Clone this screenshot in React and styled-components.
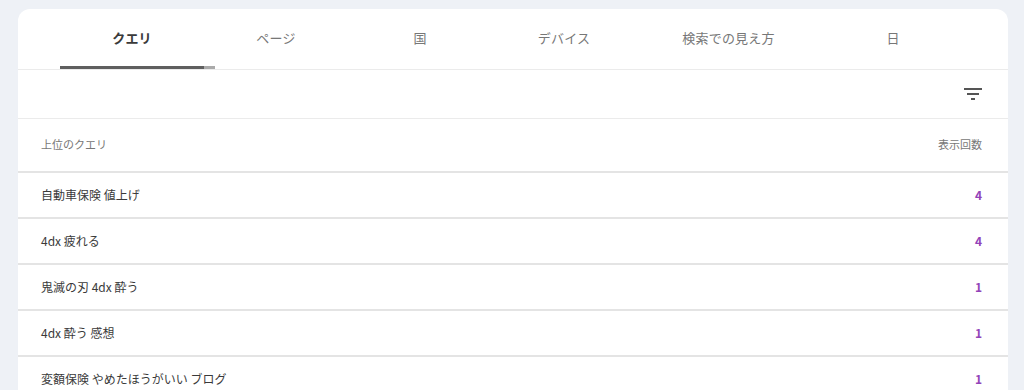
import React from "react";
import styled, { createGlobalStyle } from "styled-components";

const GlobalStyle = createGlobalStyle`
  html, body {
    margin: 0;
    padding: 0;
    background: #eef1f6;
    font-family: "Noto Sans CJK JP", "Noto Sans", "Liberation Sans", sans-serif;
    -webkit-font-smoothing: antialiased;
  }
  *, *::before, *::after {
    box-sizing: border-box;
  }
`;

const Page = styled.div`
  padding: 9px 16px 0 18px;
  height: 390px;
  overflow: hidden;
`;

const Card = styled.div`
  background: #fff;
  border-radius: 12px;
  overflow: hidden;
  min-height: 420px;
`;

const TabBar = styled.div`
  display: flex;
  height: 61px;
  padding-left: 42px;
  border-bottom: 1px solid #ebebeb;
`;

const Tab = styled.div`
  position: relative;
  flex: 0 0 ${({ width }) => width}px;
  display: flex;
  align-items: center;
  justify-content: center;
  padding-bottom: 3px;
  font-size: 13px;
  font-weight: ${({ active }) => (active ? 700 : 400)};
  color: ${({ active }) => (active ? "#3a3a3a" : "#777")};
  letter-spacing: 0.2px;
`;

const Indicator = styled.span`
  position: absolute;
  left: 0;
  bottom: 0;
  width: 155px;
  height: 3px;
  background: linear-gradient(to right, #5f5f5f 93%, #aaa 93%);
`;

const Toolbar = styled.div`
  display: flex;
  align-items: center;
  justify-content: flex-end;
  height: 49px;
  padding-right: 23px;
  border-bottom: 1px solid #ebebeb;
`;

const IconButton = styled.div`
  width: 24px;
  height: 24px;
  color: #555;
  display: flex;
`;

const Row = styled.div`
  display: flex;
  align-items: center;
  justify-content: space-between;
  height: ${({ header }) => (header ? 52 : 46)}px;
  padding: 0 26px 2px 23px;
  border-top: ${({ header }) => (header ? "none" : "2px solid #e4e4e4")};
`;

const Query = styled.span`
  font-size: ${({ header }) => (header ? 11 : 12)}px;
  color: ${({ header }) => (header ? "#777" : "#3a3a3a")};
`;

const Count = styled.span`
  font-size: ${({ header }) => (header ? 11 : 12)}px;
  font-weight: ${({ header }) => (header ? 400 : 600)};
  color: ${({ header }) => (header ? "#777" : "#9343b8")};
`;

const FilterIcon = () => (
  <svg width="24" height="24" viewBox="0 0 24 24" fill="currentColor">
    <path d="M10 18h4v-2h-4v2zM3 6v2h18V6H3zm3 7h12v-2H6v2z" />
  </svg>
);

const tabs = [
  { label: "クエリ", width: 144, active: true },
  { label: "ページ", width: 144 },
  { label: "国", width: 144 },
  { label: "デバイス", width: 144 },
  { label: "検索での見え方", width: 185 },
  { label: "日", width: 144 },
];

const rows = [
  { query: "自動車保険 値上げ", count: 4 },
  { query: "4dx 疲れる", count: 4 },
  { query: "鬼滅の刃 4dx 酔う", count: 1 },
  { query: "4dx 酔う 感想", count: 1 },
  { query: "変額保険 やめたほうがいい ブログ", count: 1 },
];

export default function App() {
  return (
    <>
      <GlobalStyle />
      <Page>
        <Card>
          <TabBar>
            {tabs.map((t) => (
              <Tab key={t.label} width={t.width} active={t.active}>
                {t.label}
                {t.active && <Indicator />}
              </Tab>
            ))}
          </TabBar>
          <Toolbar>
            <IconButton>
              <FilterIcon />
            </IconButton>
          </Toolbar>
          <Row header>
            <Query header>上位のクエリ</Query>
            <Count header>表示回数</Count>
          </Row>
          {rows.map((r) => (
            <Row key={r.query}>
              <Query>{r.query}</Query>
              <Count>{r.count}</Count>
            </Row>
          ))}
        </Card>
      </Page>
    </>
  );
}
